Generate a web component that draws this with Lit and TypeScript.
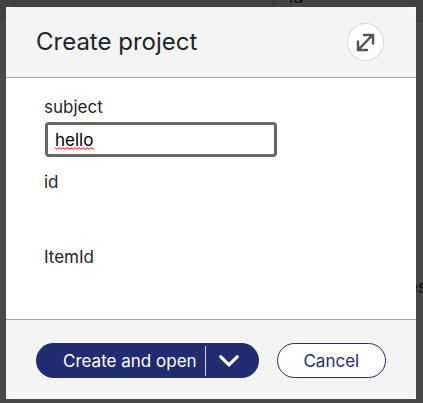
import { LitElement, html, css } from "lit";
import { customElement, property, state } from "lit/decorators.js";

@customElement("page-behind")
class PageBehind extends LitElement {
  static styles = css`
    :host {
      display: block;
      overflow: hidden;
      background: #484848;
      color: #0b0c12;
      font: 17px/22px Inter, "Liberation Sans", sans-serif;
    }
    .head {
      height: 22px;
      background: #424242;
    }
    .column {
      position: absolute;
      top: -14px;
      left: 273px;
      padding-left: 15px;
      border-left: 1px solid #333333;
    }
    .cell {
      position: absolute;
      top: 276px;
      right: -4px;
    }
  `;

  render() {
    return html`
      <div class="head"></div>
      <span class="column">id</span>
      <span class="cell">es</span>
    `;
  }
}

@customElement("project-dialog")
class ProjectDialog extends LitElement {
  @property() heading = "Create project";
  @state() private subject = "hello";

  static styles = css`
    :host {
      display: flex;
      flex-direction: column;
      background: #ffffff;
      color: #212529;
      font: 17px/22px Inter, "Liberation Sans", sans-serif;
    }
    button,
    input {
      box-sizing: border-box;
      margin: 0;
      font: inherit;
    }
    button {
      padding: 0;
      cursor: pointer;
    }
    header {
      display: flex;
      align-items: center;
      justify-content: space-between;
      padding: 16px 32px 16px 30px;
      background: #f4f4f4;
      border-bottom: 1px solid #a5a5a5;
      border-radius: 6px 6px 0 0;
    }
    h1 {
      margin: 0;
      font-size: 24px;
      line-height: 32px;
      font-weight: 400;
    }
    .expand {
      display: grid;
      place-items: center;
      width: 37px;
      height: 38px;
      border: 1px solid #d8d8d8;
      border-radius: 50%;
      background: #ffffff;
    }
    .fields {
      flex: 1;
      display: flex;
      flex-direction: column;
      align-items: flex-start;
      padding: 18px 38px;
    }
    .entry {
      display: grid;
      width: 232px;
      max-width: 100%;
      margin: 4px 1px 14px;
    }
    .entry input {
      grid-area: 1 / 1;
      width: 100%;
      height: 35px;
      padding: 0 7px;
      border: 3px solid #666666;
      border-radius: 4px;
      outline: none;
      background: #ffffff;
      color: #000000;
    }
    .squiggle {
      grid-area: 1 / 1;
      align-self: end;
      margin: 0 10px 7px;
      z-index: 1;
      pointer-events: none;
    }
    .value {
      height: 53px;
    }
    footer {
      display: flex;
      gap: 18px;
      padding: 23px 30px 21px;
      background: #f4f4f4;
      border-top: 1px solid #a5a5a5;
      border-radius: 0 0 6px 6px;
    }
    .split {
      flex: 222 1 0;
      display: flex;
      align-items: center;
      height: 35px;
      border-radius: 18px;
      background: #222c70;
    }
    .split button {
      border: 0;
      background: none;
      color: #ffffff;
      white-space: nowrap;
    }
    .split .main {
      flex: 1;
      height: 35px;
      padding: 0 8px 0 27px;
    }
    .split .more {
      display: grid;
      place-items: center;
      width: 54px;
      height: 30px;
      padding-right: 6px;
      border-left: 1px solid #d3d5e2;
    }
    .cancel {
      flex: 110 1 0;
      height: 35px;
      border: 1px solid #222c70;
      border-radius: 18px;
      background: #ffffff;
      color: #222c70;
    }
  `;

  private onInput(e: Event) {
    this.subject = (e.target as HTMLInputElement).value;
  }

  render() {
    return html`
      <header>
        <h1>${this.heading}</h1>
        <button class="expand" aria-label="Expand">
          <svg width="19" height="19" viewBox="0 0 19 19" fill="none" stroke="#555555" stroke-width="2.5" stroke-linecap="round">
            <path d="M2 17 16.5 2M8 2H17V10.5M2 8.5V17H11" />
          </svg>
        </button>
      </header>
      <div class="fields">
        <label for="subject">subject</label>
        <div class="entry">
          <input id="subject" type="text" spellcheck="true" .value=${this.subject} @input=${this.onInput} />
          ${this.subject === "hello"
            ? html`<svg class="squiggle" width="39" height="3" viewBox="0 0 39 3" fill="none" stroke="#ff0000" aria-hidden="true">
                <path d="M0 .7 2 2.3 4 .7 6 2.3 8 .7 10 2.3 12 .7 14 2.3 16 .7 18 2.3 20 .7 22 2.3 24 .7 26 2.3 28 .7 30 2.3 32 .7 34 2.3 36 .7 38 2.3 39 1.5" />
              </svg>`
            : null}
        </div>
        <span class="name">id</span>
        <span class="value"></span>
        <span class="name">ItemId</span>
      </div>
      <footer>
        <div class="split">
          <button class="main">Create and open</button>
          <button class="more" aria-label="More create options">
            <svg width="22" height="14" viewBox="0 0 22 14" fill="none" stroke="#ffffff" stroke-width="3.2" stroke-linecap="round">
              <path d="M2.8 2.8 11 10.8 19.2 2.8" />
            </svg>
          </button>
        </div>
        <button class="cancel">Cancel</button>
      </footer>
    `;
  }
}

@customElement("app-root")
class AppRoot extends LitElement {
  static styles = css`
    :host {
      position: relative;
      box-sizing: border-box;
      display: flex;
      min-height: 100vh;
      padding: 7px 7px 4px 6px;
    }
    page-behind {
      position: absolute;
      inset: 0;
    }
    project-dialog {
      position: relative;
      flex: 1;
      min-width: 0;
    }
  `;

  render() {
    return html`
      <page-behind></page-behind>
      <project-dialog role="dialog" aria-label="Create project"></project-dialog>
    `;
  }
}
